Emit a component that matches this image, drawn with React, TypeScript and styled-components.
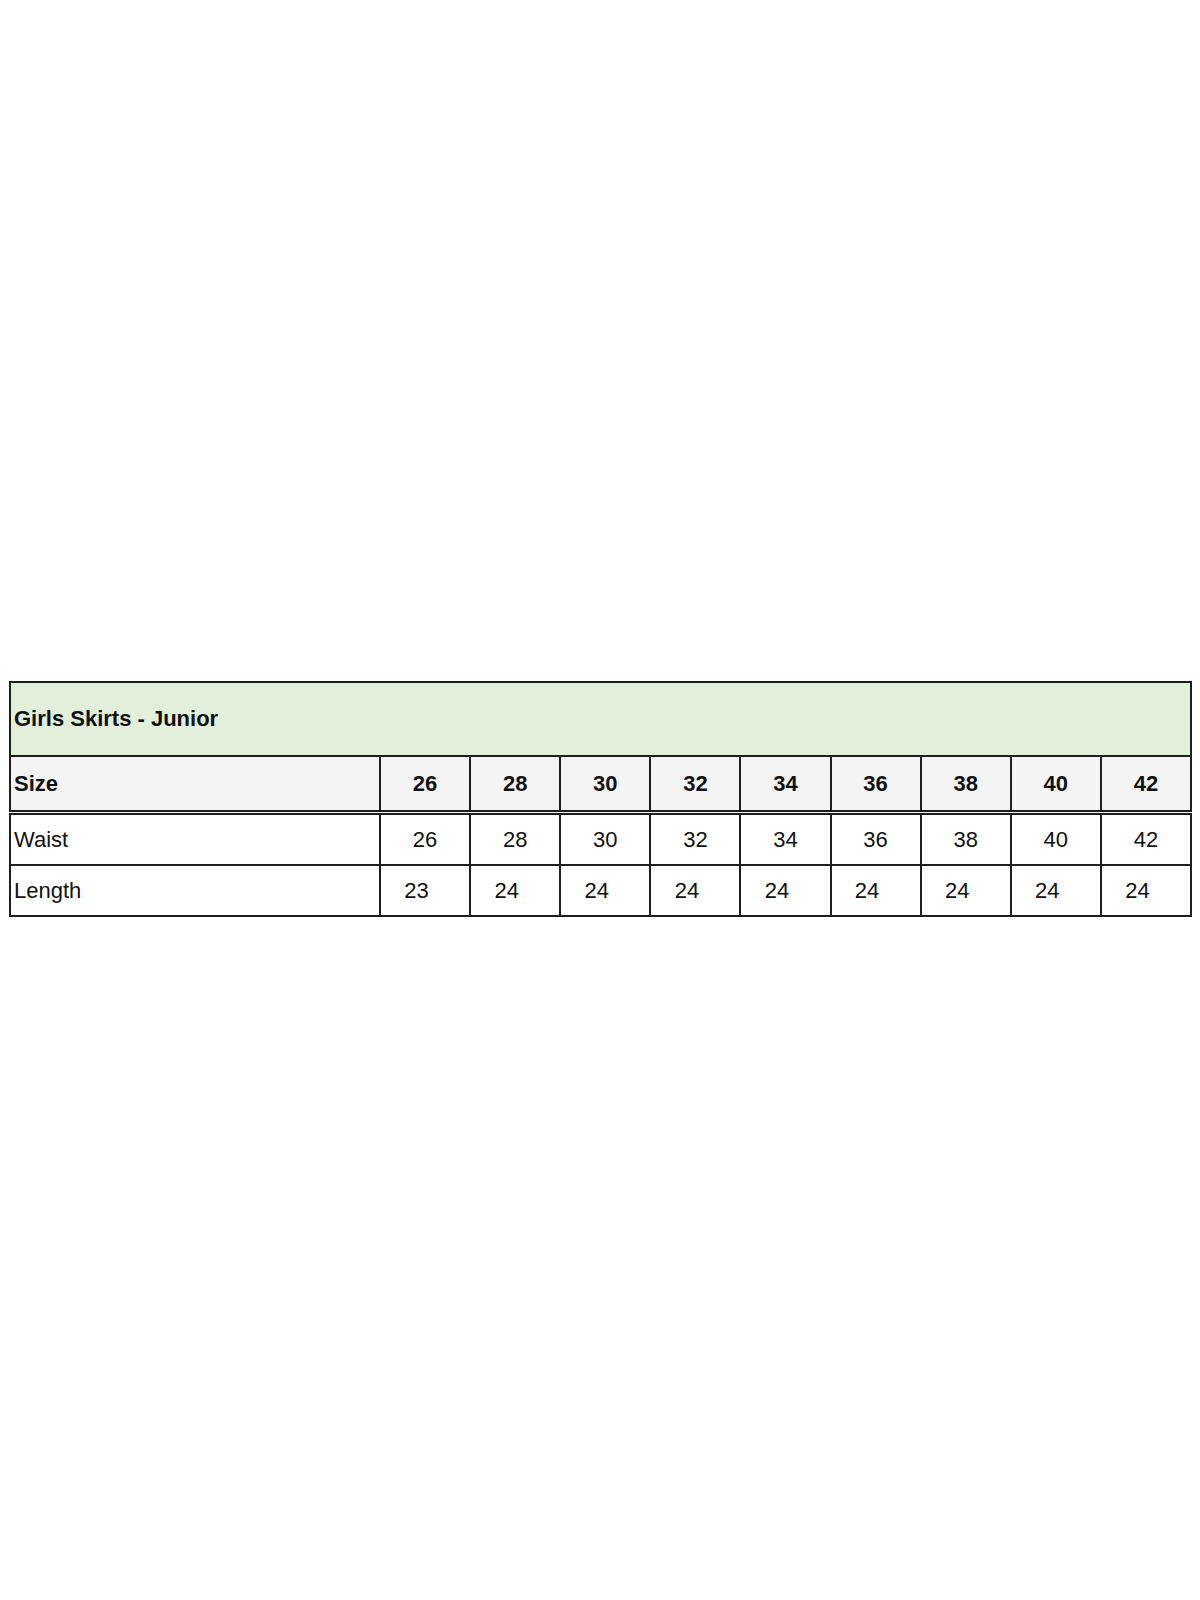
import React from "react";
import styled, { createGlobalStyle } from "styled-components";

const GlobalStyle = createGlobalStyle`
  html, body {
    margin: 0;
    padding: 0;
    background: #ffffff;
  }
  body {
    font-family: "Liberation Sans", Arial, sans-serif;
    color: #111111;
  }
`;

const Page = styled.div`
  width: 1200px;
  height: 1600px;
  box-sizing: border-box;
  padding: 681px 8px 0 9px;
`;

const Table = styled.table`
  width: 1183px;
  border-collapse: collapse;
  table-layout: fixed;
  border: 2px solid #1e1e1e;
  font-size: 22px;
`;

const TitleCell = styled.td`
  height: 72px;
  padding: 0 0 0 3px;
  background: #e2efda;
  border: 2px solid #1e1e1e;
  font-weight: 700;
  text-align: left;
`;

const HeadCell = styled.th<{ $label?: boolean }>`
  height: 53px;
  padding: ${(p) => (p.$label ? "0 0 0 3px" : "0")};
  background: #f4f4f4;
  border: 2px solid #1e1e1e;
  border-bottom: 5px double #1e1e1e;
  font-weight: 700;
  text-align: ${(p) => (p.$label ? "left" : "center")};
`;

const Cell = styled.td<{ $label?: boolean; $shift?: boolean }>`
  height: 49px;
  padding: ${(p) => (p.$label ? "0 0 0 3px" : p.$shift ? "0 17px 0 0" : "0")};
  border: 2px solid #1e1e1e;
  font-weight: 400;
  text-align: ${(p) => (p.$label ? "left" : "center")};
`;

const sizes = [26, 28, 30, 32, 34, 36, 38, 40, 42];
const waist = [26, 28, 30, 32, 34, 36, 38, 40, 42];
const length = [23, 24, 24, 24, 24, 24, 24, 24, 24];

const App = () => {
  return (
    <Page>
      <GlobalStyle />
      <Table>
        <colgroup>
          <col style={{ width: 370 }} />
          {sizes.map((s) => (
            <col key={s} />
          ))}
        </colgroup>
        <tbody>
          <tr>
            <TitleCell colSpan={10}>Girls Skirts - Junior</TitleCell>
          </tr>
          <tr>
            <HeadCell $label>Size</HeadCell>
            {sizes.map((s) => (
              <HeadCell key={s}>{s}</HeadCell>
            ))}
          </tr>
          <tr>
            <Cell $label>Waist</Cell>
            {waist.map((w, i) => (
              <Cell key={i}>{w}</Cell>
            ))}
          </tr>
          <tr>
            <Cell $label>Length</Cell>
            {length.map((l, i) => (
              <Cell key={i} $shift>
                {l}
              </Cell>
            ))}
          </tr>
        </tbody>
      </Table>
    </Page>
  );
};

export default App;
